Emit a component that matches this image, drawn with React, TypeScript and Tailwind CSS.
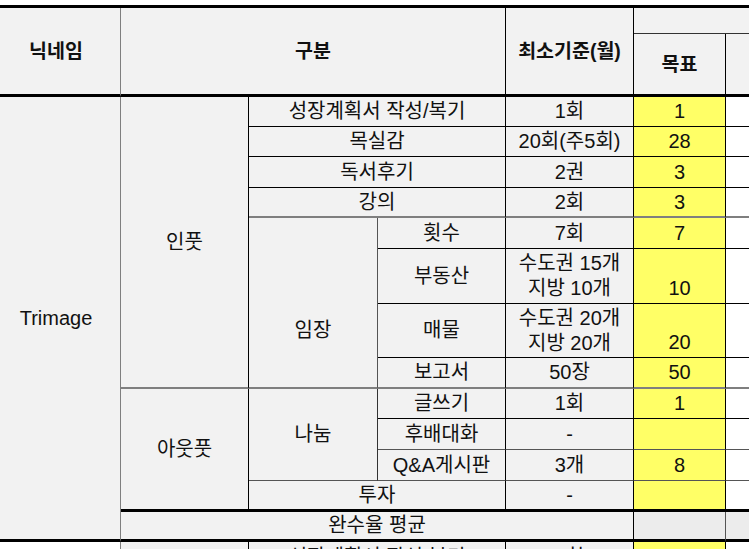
import React from "react";

const C = "flex items-center justify-center text-center leading-[25px]";
const H = "flex items-center justify-center text-center font-bold text-[19.5px] leading-[25px]";
const Y = "bg-[#ffff66]";

export default function App() {
  return (
    <div className="w-[749px] h-[549px] overflow-hidden bg-white font-['Liberation_Sans','Noto_Sans_CJK_KR',sans-serif] text-[20px] text-[#111]">
      <div className="-ml-2 mt-[5px] w-[800px] border-t-[3px] border-black bg-[#f2f2f2] grid grid-cols-[129px_128px_129px_128px_128px_92px_1fr] grid-rows-[26px_63px_30px_30px_31px_30px_31px_55px_54px_31px_30px_31px_31px_31px_30px_31px]">
        {/* Header */}
        <div className={`${H} col-start-1 row-start-1 row-span-2 border-r border-r-[#7f7f7f] border-b-[3px] border-b-black`}>닉네임</div>
        <div className={`${H} col-start-2 col-span-3 row-start-1 row-span-2 border-r border-r-black border-b-[3px] border-b-black`}>구분</div>
        <div className={`${H} col-start-5 row-start-1 row-span-2 border-r border-r-black border-b-[3px] border-b-black`}>최소기준(월)</div>
        <div className="col-start-6 col-span-2 row-start-1 border-b border-b-[#333]"></div>
        <div className={`${H} col-start-6 row-start-2 border-r border-r-black border-b-[3px] border-b-black`}>목표</div>
        <div className="col-start-7 row-start-2 border-b-[3px] border-b-black"></div>

        {/* Nickname */}
        <div className={`${C} col-start-1 row-start-3 row-span-13 border-r border-r-[#7f7f7f] border-b-[3px] border-b-black`}>Trimage</div>

        {/* 인풋 */}
        <div className={`${C} col-start-2 row-start-3 row-span-8 border-r border-r-black border-b-2 border-b-[#7f7f7f]`}>인풋</div>

        {/* row 3 */}
        <div className={`${C} col-start-3 col-span-2 row-start-3 border-r border-r-black border-b border-b-black`}>성장계획서 작성/복기</div>
        <div className={`${C} col-start-5 row-start-3 border-r border-r-black border-b border-b-black`}>1회</div>
        <div className={`${C} ${Y} col-start-6 row-start-3 border-r border-r-black border-b border-b-black`}>1</div>
        <div className="col-start-7 row-start-3 bg-white border-b border-b-black"></div>

        {/* row 4 */}
        <div className={`${C} col-start-3 col-span-2 row-start-4 border-r border-r-black border-b border-b-black`}>목실감</div>
        <div className={`${C} col-start-5 row-start-4 border-r border-r-black border-b border-b-black`}>20회(주5회)</div>
        <div className={`${C} ${Y} col-start-6 row-start-4 border-r border-r-black border-b border-b-black`}>28</div>
        <div className="col-start-7 row-start-4 bg-white border-b border-b-black"></div>

        {/* row 5 */}
        <div className={`${C} col-start-3 col-span-2 row-start-5 border-r border-r-black border-b border-b-black`}>독서후기</div>
        <div className={`${C} col-start-5 row-start-5 border-r border-r-black border-b border-b-black`}>2권</div>
        <div className={`${C} ${Y} col-start-6 row-start-5 border-r border-r-black border-b border-b-black`}>3</div>
        <div className="col-start-7 row-start-5 bg-white border-b border-b-black"></div>

        {/* row 6 */}
        <div className={`${C} col-start-3 col-span-2 row-start-6 border-r border-r-black border-b-2 border-b-[#7f7f7f]`}>강의</div>
        <div className={`${C} col-start-5 row-start-6 border-r border-r-black border-b-2 border-b-[#7f7f7f]`}>2회</div>
        <div className={`${C} ${Y} col-start-6 row-start-6 border-r border-r-black border-b-2 border-b-[#7f7f7f]`}>3</div>
        <div className="col-start-7 row-start-6 bg-white border-b-2 border-b-[#7f7f7f]"></div>

        {/* 임장 */}
        <div className={`${C} col-start-3 row-start-7 row-span-4 border-r border-r-[#555] border-b-2 border-b-[#7f7f7f] pt-[56px]`}>임장</div>

        {/* row 7 */}
        <div className={`${C} col-start-4 row-start-7 border-r border-r-black border-b border-b-black`}>횟수</div>
        <div className={`${C} col-start-5 row-start-7 border-r border-r-black border-b border-b-black`}>7회</div>
        <div className={`${C} ${Y} col-start-6 row-start-7 border-r border-r-black border-b border-b-black`}>7</div>
        <div className="col-start-7 row-start-7 bg-white border-b border-b-black"></div>

        {/* row 8 */}
        <div className={`${C} col-start-4 row-start-8 border-r border-r-black border-b border-b-black`}>부동산</div>
        <div className={`${C} col-start-5 row-start-8 border-r border-r-black border-b border-b-black flex-col`}>
          <span>수도권 15개</span>
          <span>지방 10개</span>
        </div>
        <div className={`flex items-end justify-center leading-[25px] pb-[2px] ${Y} col-start-6 row-start-8 border-r border-r-black border-b border-b-black`}>10</div>
        <div className="col-start-7 row-start-8 bg-white border-b border-b-black"></div>

        {/* row 9 */}
        <div className={`${C} col-start-4 row-start-9 border-r border-r-black border-b border-b-black`}>매물</div>
        <div className={`${C} col-start-5 row-start-9 border-r border-r-black border-b border-b-black flex-col`}>
          <span>수도권 20개</span>
          <span>지방 20개</span>
        </div>
        <div className={`flex items-end justify-center leading-[25px] pb-[2px] ${Y} col-start-6 row-start-9 border-r border-r-black border-b border-b-black`}>20</div>
        <div className="col-start-7 row-start-9 bg-white border-b border-b-black"></div>

        {/* row 10 */}
        <div className={`${C} col-start-4 row-start-10 border-r border-r-black border-b-2 border-b-[#7f7f7f]`}>보고서</div>
        <div className={`${C} col-start-5 row-start-10 border-r border-r-black border-b-2 border-b-[#7f7f7f]`}>50장</div>
        <div className={`${C} ${Y} col-start-6 row-start-10 border-r border-r-black border-b-2 border-b-[#7f7f7f]`}>50</div>
        <div className="col-start-7 row-start-10 bg-white border-b-2 border-b-[#7f7f7f]"></div>

        {/* 아웃풋 */}
        <div className={`${C} col-start-2 row-start-11 row-span-4 border-r border-r-black border-b-[3px] border-b-black`}>아웃풋</div>
        {/* 나눔 */}
        <div className={`${C} col-start-3 row-start-11 row-span-3 border-r border-r-[#333] border-b border-b-[#555]`}>나눔</div>

        {/* row 11 */}
        <div className={`${C} col-start-4 row-start-11 border-r border-r-black border-b border-b-black`}>글쓰기</div>
        <div className={`${C} col-start-5 row-start-11 border-r border-r-black border-b border-b-black`}>1회</div>
        <div className={`${C} ${Y} col-start-6 row-start-11 border-r border-r-black border-b border-b-black`}>1</div>
        <div className="col-start-7 row-start-11 bg-white border-b border-b-black"></div>

        {/* row 12 */}
        <div className={`${C} col-start-4 row-start-12 border-r border-r-black border-b border-b-[#555]`}>후배대화</div>
        <div className={`${C} col-start-5 row-start-12 border-r border-r-black border-b border-b-[#555]`}>-</div>
        <div className={`${C} ${Y} col-start-6 row-start-12 border-r border-r-black border-b border-b-[#555]`}></div>
        <div className="col-start-7 row-start-12 bg-white border-b border-b-[#555]"></div>

        {/* row 13 */}
        <div className={`${C} col-start-4 row-start-13 border-r border-r-black border-b border-b-[#555]`}>Q&amp;A게시판</div>
        <div className={`${C} col-start-5 row-start-13 border-r border-r-black border-b border-b-[#555]`}>3개</div>
        <div className={`${C} ${Y} col-start-6 row-start-13 border-r border-r-black border-b border-b-[#555]`}>8</div>
        <div className="col-start-7 row-start-13 bg-white border-b border-b-[#555]"></div>

        {/* row 14 */}
        <div className={`${C} col-start-3 col-span-2 row-start-14 border-r border-r-black border-b-[3px] border-b-black`}>투자</div>
        <div className={`${C} col-start-5 row-start-14 border-r border-r-black border-b-[3px] border-b-black`}>-</div>
        <div className={`${C} ${Y} col-start-6 row-start-14 border-r border-r-black border-b-[3px] border-b-black`}></div>
        <div className="col-start-7 row-start-14 bg-white border-b-[3px] border-b-black"></div>

        {/* row 15 */}
        <div className={`${C} col-start-2 col-span-4 row-start-15 border-r border-r-black border-b-[3px] border-b-black`}>완수율 평균</div>
        <div className="col-start-6 row-start-15 bg-[#ececec] border-r border-r-[#555] border-b-[3px] border-b-black"></div>
        <div className="col-start-7 row-start-15 bg-[#ececec] border-b-[3px] border-b-black"></div>

        {/* row 16 (partially visible) */}
        <div className="col-start-1 row-start-16 bg-white border-r border-r-[#7f7f7f]"></div>
        <div className="col-start-2 row-start-16 border-r border-r-black"></div>
        <div className={`${C} col-start-3 col-span-2 row-start-16 border-r border-r-black`}>성장계획서 작성/복기</div>
        <div className={`${C} col-start-5 row-start-16 border-r border-r-black`}>1회</div>
        <div className={`${C} ${Y} col-start-6 row-start-16 border-r border-r-black`}>1</div>
        <div className="col-start-7 row-start-16 bg-white"></div>
      </div>
    </div>
  );
}
